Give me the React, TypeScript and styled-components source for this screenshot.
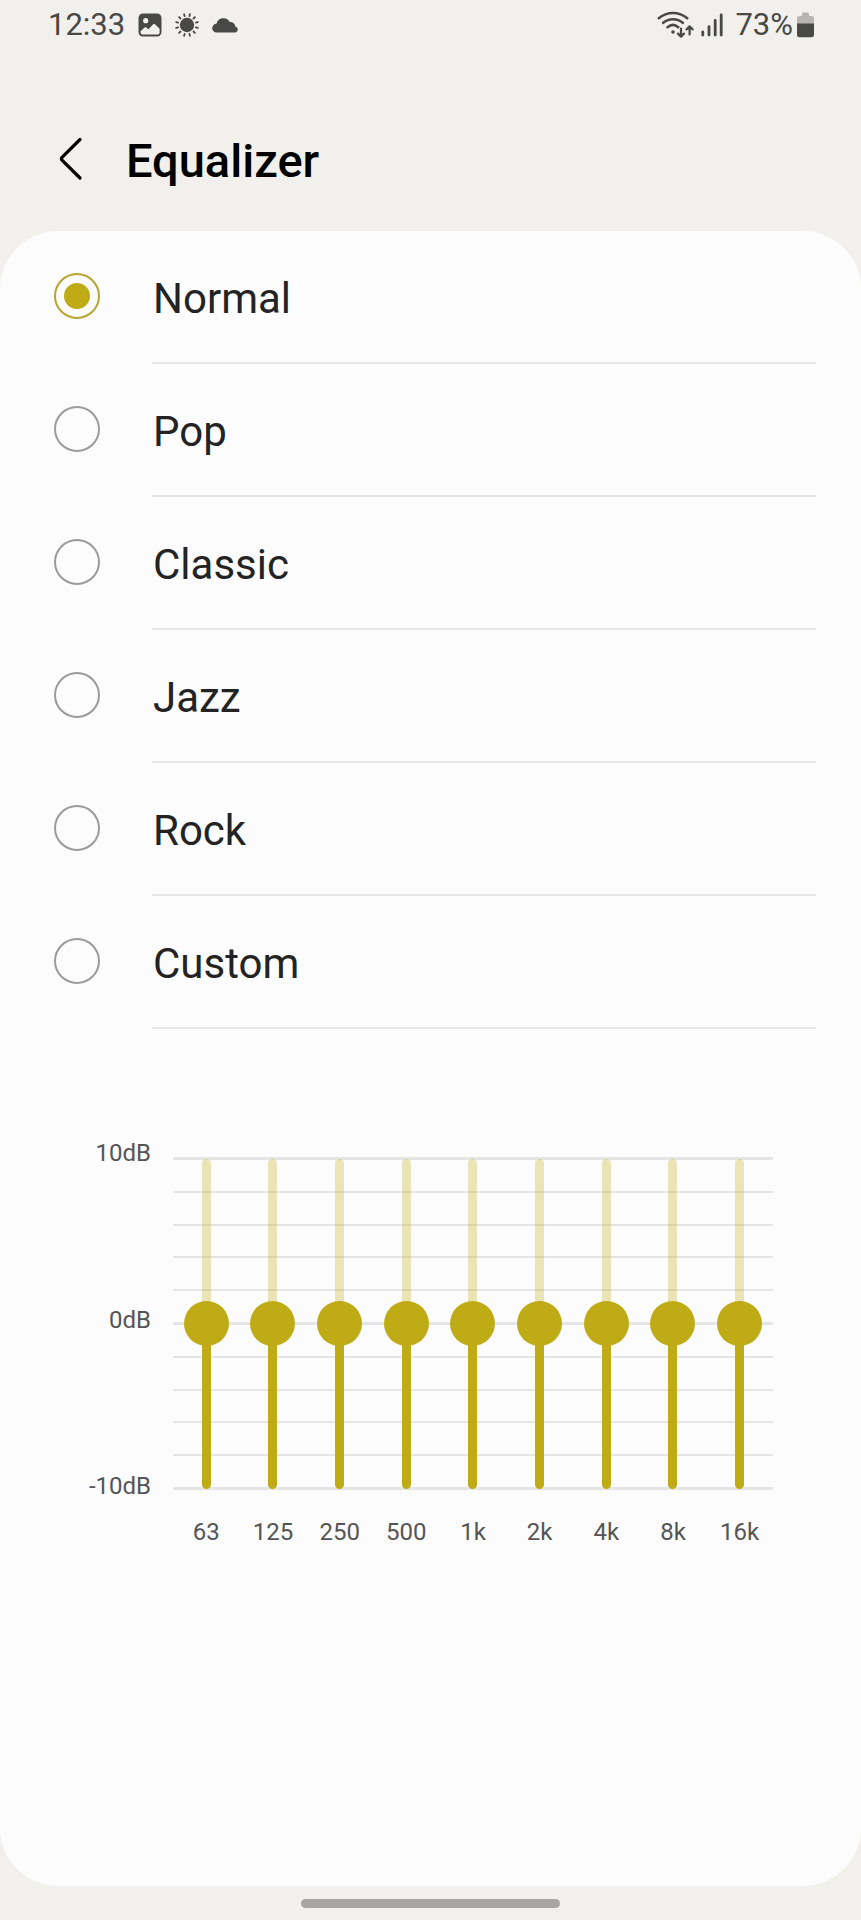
import React, { useState } from "react";
import styled, { createGlobalStyle } from "styled-components";

const accent = "#bfab15";
const ink = "#484846";

const GlobalStyle = createGlobalStyle`
  *, *::before, *::after { box-sizing: border-box; }
  body {
    margin: 0;
    background: #f1f0ec;
    font-family: Roboto, "Liberation Sans", sans-serif;
  }
`;

const Screen = styled.div`
  display: flex;
  flex-direction: column;
  min-height: 100vh;
`;

const StatusBar = styled.div`
  display: flex;
  justify-content: space-between;
  height: 50px;
  padding: 0 47px 0 48px;
  color: ${ink};
  font-size: 31px;
  line-height: 50px;
`;

const StatusGroup = styled.div<{ $gap: number }>`
  display: flex;
  align-items: center;
  gap: ${({ $gap }) => $gap}px;

  svg { display: block; }
`;

const Header = styled.header`
  display: flex;
  align-items: center;
  gap: 34px;
  padding: 81px 48px 40px;
`;

const BackButton = styled.button`
  display: flex;
  align-items: center;
  width: 44px;
  height: 60px;
  padding: 0;
  border: 0;
  background: none;
  color: #000;
  cursor: pointer;
`;

const Title = styled.h1`
  margin: 0;
  color: #000;
  font-size: 47px;
  font-weight: 500;
  line-height: 60px;
`;

const Sheet = styled.main`
  flex: 1;
  border-radius: 58px;
  background: #fcfcfc;
`;

const PresetList = styled.fieldset`
  margin: 0;
  padding: 0;
  border: 0;
`;

const PresetRow = styled.label`
  display: flex;
  align-items: center;
  gap: 52px;
  padding: 0 45px 0 54px;
  cursor: pointer;
`;

const PresetRadio = styled.input`
  display: grid;
  flex: none;
  place-items: center;
  appearance: none;
  width: 46px;
  height: 46px;
  margin: 0 0 4px;
  border: 2px solid #9b9b9b;
  border-radius: 50%;

  &:checked { border-color: #b5a632; }

  &:checked::before {
    content: "";
    width: 26px;
    height: 26px;
    border-radius: 50%;
    background: ${accent};
  }
`;

const PresetName = styled.span`
  flex: 1;
  height: 133px;
  padding-top: 2px;
  border-bottom: 2px solid #e6e6e6;
  color: #232323;
  font-size: 42px;
  line-height: 131px;
  text-indent: 1px;
`;

const Equalizer = styled.section`
  display: grid;
  grid-template-columns: 129px 1fr;
  gap: 16px 22px;
  padding: 109px 88px 48px 22px;
  color: #555;
  font-size: 24px;
  line-height: 30px;
`;

const LevelAxis = styled.div`
  display: flex;
  flex-direction: column;
  justify-content: space-between;
  height: 363px;
  text-align: right;
`;

const Plot = styled.div`
  display: grid;
  padding: 19px 0 11px;
`;

const GridLines = styled.div`
  display: flex;
  grid-area: 1 / 1;
  flex-direction: column;
  justify-content: space-between;
`;

const GridLine = styled.div<{ $major: boolean }>`
  height: ${({ $major }) => ($major ? 3 : 2)}px;
  background: #e5e5e5;
`;

const Bands = styled.div`
  display: grid;
  grid-area: 1 / 1;
  grid-template-columns: repeat(9, 1fr);
  place-items: center;
`;

const BandSlider = styled.input`
  appearance: none;
  writing-mode: vertical-lr;
  direction: rtl;
  width: 45px;
  height: 330px;
  margin: 0;
  background: none;
  cursor: pointer;

  &::-webkit-slider-runnable-track {
    width: 9px;
    height: 330px;
    border-radius: 5px;
    background: linear-gradient(
      to top,
      ${accent} var(--level),
      rgba(191, 171, 21, 0.3) var(--level)
    );
  }

  &::-webkit-slider-thumb {
    appearance: none;
    width: 45px;
    height: 45px;
    margin-left: -18px;
    border-radius: 50%;
    background: ${accent};
  }
`;

const BandNames = styled.div`
  display: grid;
  grid-column: 2;
  grid-template-columns: repeat(9, 1fr);
  text-align: center;
`;

const HomeArea = styled.footer`
  display: flex;
  justify-content: center;
  height: 34px;
  padding-top: 13px;
`;

const HomeHandle = styled.div`
  width: 30%;
  height: 9px;
  border-radius: 5px;
  background: #a7a6a2;
`;

const presets = ["Normal", "Pop", "Classic", "Jazz", "Rock", "Custom"];
const bands = ["63", "125", "250", "500", "1k", "2k", "4k", "8k", "16k"];
const gridSteps = Array.from({ length: 11 }, (_, i) => 10 - i * 2);

const PictureIcon = () => (
  <svg width="24" height="24" viewBox="0 0 24 24" aria-hidden="true">
    <rect x="0.5" y="0.5" width="23" height="23" rx="4.5" fill={ink} />
    <circle cx="7.7" cy="7.7" r="2.6" fill="#f1f0ec" />
    <path
      d="M2.6 18.2 6.6 14.4Q7.4 13.8 8.2 14.4L10.4 16.2 15.2 11.2Q16.1 10.3 17 11.2L21.6 15.8V19.6Q21.6 21.6 19.6 21.6H4.6Q2.6 21.6 2.6 19.6Z"
      fill="#f1f0ec"
    />
  </svg>
);

const SunIcon = () => (
  <svg width="24" height="24" viewBox="0 0 24 24" aria-hidden="true">
    <circle cx="12" cy="12" r="7.2" fill={ink} />
    {Array.from({ length: 12 }, (_, i) => (
      <path
        key={i}
        d="M12 .8V2.8"
        stroke={ink}
        strokeWidth="1.8"
        strokeLinecap="round"
        transform={`rotate(${15 + i * 30} 12 12)`}
      />
    ))}
  </svg>
);

const CloudIcon = () => (
  <svg width="27" height="16" viewBox="0 0 27 16" aria-hidden="true">
    <path
      d="M4.6 15.4A4.3 4.3 0 0 1 4.4 6.8 7.2 7.2 0 0 1 17.8 5 5.2 5.2 0 0 1 23.4 9.4 3.1 3.1 0 0 1 23.6 15.4Z"
      fill={ink}
    />
  </svg>
);

const WifiIcon = () => (
  <svg width="37" height="28" viewBox="0 0 37 28" fill="none" stroke={ink} strokeLinecap="round" aria-hidden="true">
    <path d="M1.8 7.2C10 .2 22 .2 30.2 7.2M6.2 11.8C12 7 20 7 25.8 11.8M10.6 16.2C14 13.4 18 13.4 21.2 16.2" strokeWidth="2.6" />
    <circle cx="16" cy="21" r="1.8" fill={ink} stroke="none" />
    <path d="M24 17.6V25.4M21 22.6 24 25.6 27 22.6M32.6 23.4V15.8M29.6 18.4 32.6 15.4 35.6 18.4" strokeWidth="2.2" strokeLinejoin="round" />
  </svg>
);

const SignalIcon = () => (
  <svg width="22" height="24" viewBox="0 0 22 24" stroke={ink} strokeWidth="2.8" strokeLinecap="round" aria-hidden="true">
    <path d="M1.8 19V22M8 13.6V22M14.2 7.4V22M20.2 2V22" />
  </svg>
);

const BatteryIcon = () => (
  <svg width="17" height="26" viewBox="0 0 17 26" aria-hidden="true">
    <path d="M5 2Q5 .6 6.4 .6H10.6Q12 .6 12 2V4H14.4Q17 4 17 6.6V12H0V6.6Q0 4 2.6 4H5Z" fill="#b6b5b1" />
    <path d="M0 11.4H17V22.4Q17 25.2 14.2 25.2H2.8Q0 25.2 0 22.4Z" fill={ink} />
  </svg>
);

const BackIcon = () => (
  <svg width="44" height="56" viewBox="0 0 44 56" fill="none" aria-hidden="true">
    <path
      d="M32 6.5 14 24.4Q12.8 25.8 14 27.2L32 45"
      stroke="currentColor"
      strokeWidth="3.2"
      strokeLinecap="round"
      strokeLinejoin="round"
    />
  </svg>
);

export default function App() {
  const [preset, setPreset] = useState("Normal");
  const [levels, setLevels] = useState<number[]>(bands.map(() => 0));

  const changeLevel = (index: number, value: number) =>
    setLevels((current) => current.map((level, i) => (i === index ? value : level)));

  return (
    <Screen>
      <GlobalStyle />
      <StatusBar>
        <StatusGroup $gap={13}>
          <span>12:33</span>
          <PictureIcon />
          <SunIcon />
          <CloudIcon />
        </StatusGroup>
        <StatusGroup $gap={12}>
          <StatusGroup as="span" $gap={7}>
            <WifiIcon />
            <SignalIcon />
          </StatusGroup>
          <StatusGroup as="span" $gap={4}>
            <span>73%</span>
            <BatteryIcon />
          </StatusGroup>
        </StatusGroup>
      </StatusBar>

      <Header>
        <BackButton type="button" aria-label="Back">
          <BackIcon />
        </BackButton>
        <Title>Equalizer</Title>
      </Header>

      <Sheet>
        <PresetList aria-label="Preset">
          {presets.map((name) => (
            <PresetRow key={name}>
              <PresetRadio
                type="radio"
                name="preset"
                value={name}
                checked={preset === name}
                onChange={() => setPreset(name)}
              />
              <PresetName>{name}</PresetName>
            </PresetRow>
          ))}
        </PresetList>

        <Equalizer aria-label="Frequency bands">
          <LevelAxis>
            <span>10dB</span>
            <span>0dB</span>
            <span>-10dB</span>
          </LevelAxis>
          <Plot>
            <GridLines>
              {gridSteps.map((step) => (
                <GridLine key={step} $major={step % 10 === 0} />
              ))}
            </GridLines>
            <Bands>
              {bands.map((band, i) => (
                <BandSlider
                  key={band}
                  id={`band-${band}`}
                  type="range"
                  min={-10}
                  max={10}
                  value={levels[i]}
                  onChange={(event) => changeLevel(i, Number(event.target.value))}
                  style={{ "--level": `${(levels[i] + 10) * 5}%` } as React.CSSProperties}
                />
              ))}
            </Bands>
          </Plot>
          <BandNames>
            {bands.map((band) => (
              <label key={band} htmlFor={`band-${band}`}>
                {band}
              </label>
            ))}
          </BandNames>
        </Equalizer>
      </Sheet>

      <HomeArea>
        <HomeHandle />
      </HomeArea>
    </Screen>
  );
}
